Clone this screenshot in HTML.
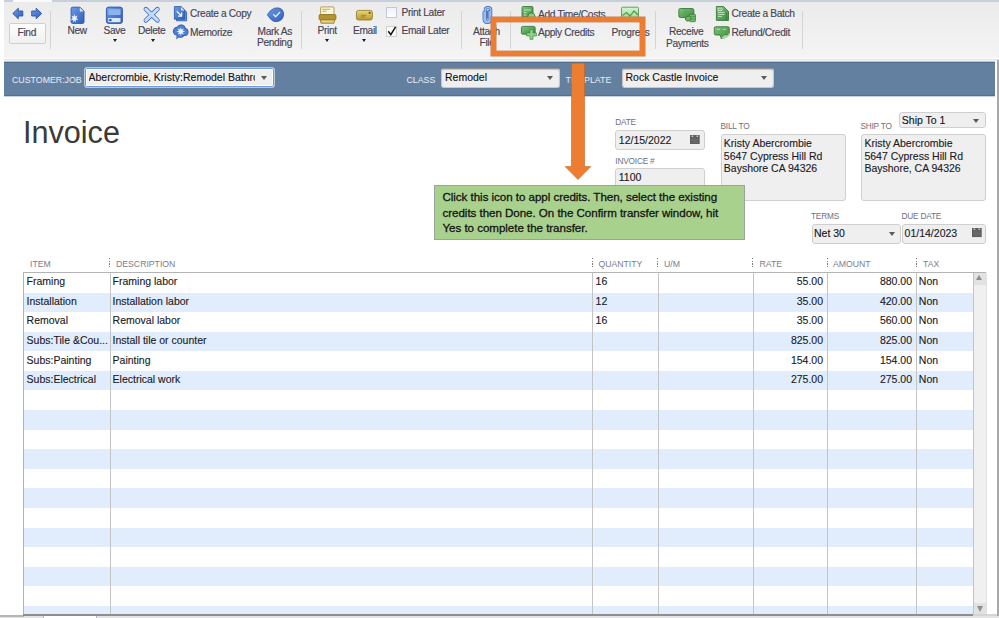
<!DOCTYPE html>
<html><head><meta charset="utf-8">
<style>
*{margin:0;padding:0;box-sizing:border-box}
html,body{width:999px;height:618px;overflow:hidden;background:#fff;font-family:"Liberation Sans",sans-serif}
.a{position:absolute}
.t{position:absolute;white-space:nowrap;line-height:1;font-family:"Liberation Sans",sans-serif}
.tb{font-size:10.2px;letter-spacing:-0.34px;color:#444456;-webkit-text-stroke:0.15px #444456}
.sep{position:absolute;width:1px;background:#d4d4d4}
.hl{font-size:8.8px;color:#e8eef5}
.lbl{font-size:8.3px;letter-spacing:-0.2px;color:#70707e}
.th{font-size:8.7px;color:#7c7c8a}
.bd{font-size:10.5px;color:#1a1a26;-webkit-text-stroke:0.12px #1a1a26}
.dd{position:absolute;background:#efefef;border:1px solid #c8c8c8;border-radius:3px;box-shadow:inset 0 1px 1px rgba(0,0,0,0.18)}
.fld{position:absolute;background:#efefef;border:1px solid #cfcfcf;border-radius:3px}
.arr{position:absolute;width:0;height:0;border-left:3.5px solid transparent;border-right:3.5px solid transparent;border-top:4px solid #5a5a5a}
.darr{position:absolute;width:0;height:0;border-left:2.6px solid transparent;border-right:2.6px solid transparent;border-top:3px solid #1a1a1a}
.row{position:absolute;left:24px;width:949px;height:19.5px}
.vl{position:absolute;top:273px;width:1px;height:342px;background:#c4c4c4}
.dots{position:absolute;top:258px;width:1.2px;height:9.5px;background:repeating-linear-gradient(#7a7a7a 0 1.3px,transparent 1.3px 2.7px)}
</style></head><body>

<!-- toolbar -->
<div class="a" style="left:4px;top:0;width:995px;height:58px;background:linear-gradient(#ebebeb,#f4f4f4)"></div>
<div class="a" style="left:4px;top:0;width:995px;height:2px;background:#c6cfda"></div>
<div class="a" style="left:13px;top:0;width:39px;height:2px;background:#fafafa"></div>
<div class="a" style="left:4px;top:58px;width:995px;height:1px;background:#fdfdfd"></div><div class="a" style="left:4px;top:59px;width:995px;height:1px;background:#e2e2e4"></div><div class="a" style="left:4px;top:60px;width:995px;height:1px;background:#f5f3ef"></div>

<svg class="a" style="left:0;top:0" width="999" height="60" viewBox="0 0 999 60">
<defs>
<linearGradient id="gb" x1="0" y1="0" x2="1" y2="1"><stop offset="0" stop-color="#6d9be6"/><stop offset="1" stop-color="#2f5fb8"/></linearGradient>
<linearGradient id="gbl" x1="0" y1="0" x2="0" y2="1"><stop offset="0" stop-color="#d6e6fc"/><stop offset="1" stop-color="#a8c6f2"/></linearGradient>
<linearGradient id="gg" x1="0" y1="0" x2="1" y2="1"><stop offset="0" stop-color="#7cc47a"/><stop offset="1" stop-color="#3f8c40"/></linearGradient>
<linearGradient id="ggl" x1="0" y1="0" x2="0" y2="1"><stop offset="0" stop-color="#d4f4d0"/><stop offset="1" stop-color="#a4dca0"/></linearGradient>
<linearGradient id="gy" x1="0" y1="0" x2="0" y2="1"><stop offset="0" stop-color="#e8d77a"/><stop offset="1" stop-color="#b89a2c"/></linearGradient>
</defs>
<!-- nav arrows -->
<path d="M12.8 13.5 L18.3 8.2 V11 H22.8 V16 H18.3 V18.8Z" fill="url(#gb)" stroke="#2856aa" stroke-width="0.9" stroke-linejoin="round"/>
<path d="M41.7 13.5 L36.2 8.2 V11 H31.7 V16 H36.2 V18.8Z" fill="url(#gb)" stroke="#2856aa" stroke-width="0.9" stroke-linejoin="round"/>
<!-- New -->
<path d="M72.5 7.2 H80 L84 11.2 V22 Q84 23.4 82.6 23.4 H72.5 Q71.1 23.4 71.1 22 V8.6 Q71.1 7.2 72.5 7.2Z" fill="url(#gb)" stroke="#2856aa" stroke-width="0.9"/>
<path d="M79.8 7.6 V11.4 H83.6Z" fill="#dce8fa"/>
<path d="M74.5 14 L75.3 16.6 L77.8 15.6 L76.3 17.9 L78.3 19.6 L75.7 19.9 L76 22.6 L74.5 20.5 L73 22.6 L73.3 19.9 L70.7 19.6 L72.7 17.9 L71.2 15.6 L73.7 16.6Z" fill="#e8f0fe"/>
<!-- Save -->
<rect x="106.4" y="7.1" width="16" height="16.3" rx="2.2" fill="url(#gb)" stroke="#2856aa" stroke-width="0.9"/>
<rect x="108.3" y="9.2" width="12.2" height="5.8" fill="#8db2ec"/>
<rect x="108.3" y="18" width="12.2" height="4.2" fill="#dae8fc"/>
<rect x="109.3" y="19" width="2.2" height="2.2" fill="#2856aa"/>
<!-- Delete -->
<path d="M145.9 9.2 L157.4 20.3 M157.4 9.2 L145.9 20.3" stroke="#3a68bc" stroke-width="4.6" stroke-linecap="round"/>
<path d="M145.9 9.2 L157.4 20.3 M157.4 9.2 L145.9 20.3" stroke="url(#gbl)" stroke-width="2.8" stroke-linecap="round"/>
<path d="M145.9 9.2 L157.4 20.3 M157.4 9.2 L145.9 20.3" stroke="#c4dafa" stroke-width="2.8" stroke-linecap="round"/>
<!-- Create a Copy -->
<path d="M176.5 8.5 H183 L186.6 12.1 V20.8 H176.5Z" fill="#6f98da" stroke="#2856aa" stroke-width="0.8"/>
<path d="M174.4 6.6 H181.2 L184.8 10.2 V19.2 H174.4Z" fill="url(#gb)" stroke="#2856aa" stroke-width="0.8"/>
<path d="M181 6.9 V10.4 H184.5Z" fill="#dce8fa"/>
<path d="M176.8 11.3 L181.3 15.8 M181.6 12.6 V16.1 H178.1" stroke="#eef4fe" stroke-width="1.3" fill="none"/>
<!-- Memorize -->
<g fill="#2856aa">
<circle cx="177.3" cy="31.2" r="4.4"/><circle cx="181.2" cy="29" r="4.6"/><circle cx="184.4" cy="32" r="4.1"/><circle cx="180.5" cy="33.8" r="3.9"/>
<path d="M176.6 34.6 L176.4 39.6 L180.8 35.6Z"/>
</g>
<g fill="#4f7fd0">
<circle cx="177.3" cy="31.2" r="3.6"/><circle cx="181.2" cy="29" r="3.8"/><circle cx="184.4" cy="32" r="3.3"/><circle cx="180.5" cy="33.8" r="3.1"/>
<path d="M177.2 34.4 L177.1 38.4 L180.2 35.4Z"/>
</g>
<path d="M180.8 27 L181.5 29.6 L183.9 28.4 L182.7 30.8 L185.3 31.5 L182.7 32.2 L183.9 34.6 L181.5 33.4 L180.8 36 L180.1 33.4 L177.7 34.6 L178.9 32.2 L176.3 31.5 L178.9 30.8 L177.7 28.4 L180.1 29.6Z" fill="#eaf2fe"/>
<!-- Mark As Pending -->
<path d="M267.3 14.7 Q270.5 9.5 274.5 8.2 Q279 7 282 9.5 Q284.2 12 283.5 15.5 Q282.6 20.3 277.5 21.5 Q273 22.3 270.5 19 Z" fill="url(#gb)" stroke="#2856aa" stroke-width="0.8" stroke-linejoin="round"/>
<path d="M273.3 14.3 L275.6 16.7 L280 11.9" stroke="#d8e8ff" stroke-width="1.5" fill="none"/>
<!-- Print -->
<rect x="320.6" y="6.9" width="13.4" height="8" rx="1" fill="#fbf6dc" stroke="#a88c28" stroke-width="0.8"/>
<path d="M322.3 9.3 H330 M322.3 11.3 H326.5" stroke="#b49a3c" stroke-width="0.8"/>
<rect x="319.1" y="14.6" width="16.8" height="5.2" rx="1" fill="#b49330" stroke="#8a6e1a" stroke-width="0.8"/>
<path d="M320.3 19.8 H334.7 L334 23.2 H321Z" fill="#e4d088" stroke="#8a6e1a" stroke-width="0.8"/>
<!-- Email -->
<rect x="356.4" y="10.4" width="16" height="9.6" rx="2.2" fill="url(#gy)" stroke="#927420" stroke-width="0.8"/>
<path d="M361 15.3 H366 M361 17 H365" stroke="#8a7020" stroke-width="0.7"/>
<circle cx="369.7" cy="12.8" r="1.1" fill="#6e5410"/>
<!-- Paperclip -->
<path d="M489.2 11.5 V19 Q489.2 21.3 487.2 21.3 Q485.2 21.3 485.2 19 V9.8 Q485.2 7.5 488 7.5 Q490.8 7.5 490.8 9.8 V18.8 Q490.8 22.6 487.4 22.6 Q484 22.6 484 18.8 V12.5" stroke="#3a66b8" stroke-width="2.9" fill="none" stroke-linecap="round"/>
<path d="M489.2 11.5 V19 Q489.2 21.3 487.2 21.3 Q485.2 21.3 485.2 19 V9.8 Q485.2 7.5 488 7.5 Q490.8 7.5 490.8 9.8 V18.8 Q490.8 22.6 487.4 22.6 Q484 22.6 484 18.8 V12.5" stroke="#9dbdf0" stroke-width="1.5" fill="none" stroke-linecap="round"/>
<path d="M487.2 10.5 V18.5" stroke="#1d3a86" stroke-width="0.9"/>
<!-- Add Time/Costs -->
<rect x="522" y="6.5" width="11" height="12" rx="1.2" fill="url(#gg)" stroke="#2f7030" stroke-width="0.8"/>
<path d="M524 10 H531 M524 12.5 H526.5 M524 15 H526.5" stroke="#c8e8c4" stroke-width="0.9"/>
<circle cx="531.5" cy="16.5" r="3.6" fill="#8ccc88" stroke="#2f7030" stroke-width="0.7"/>
<!-- Apply Credits -->
<rect x="521.4" y="26.4" width="13.8" height="7.8" rx="1.5" fill="url(#gg)" stroke="#2f7030" stroke-width="0.8"/>
<path d="M530.6 28.9 H533.6 V32.3 H537 V35.3 H533.6 V38.7 H530.6 V35.3 H527.2 V32.3 H530.6Z" transform="translate(-0.6 0.6)" fill="#92d28e" stroke="#3a8a3a" stroke-width="0.7"/>
<!-- Progress -->
<rect x="621.5" y="7.2" width="17" height="10.5" rx="1.2" fill="url(#ggl)" stroke="#4a8a4a" stroke-width="0.8"/>
<path d="M622.5 15.5 L626.5 12.5 L630 16 L634 11 L638 15" stroke="#4f9a4f" stroke-width="1.2" fill="none"/>
<!-- Receive Payments -->
<rect x="678.8" y="8.5" width="15" height="9" rx="1.6" fill="url(#gg)" stroke="#2f7030" stroke-width="0.8"/>
<circle cx="686" cy="12.8" r="2.2" fill="#5aa65a"/>
<rect x="689.5" y="14.2" width="6" height="7.5" rx="1" fill="#72ba70" stroke="#2f7030" stroke-width="0.7"/>
<path d="M689.8 16.6 H695.2 M689.8 19 H695.2" stroke="#3f8c40" stroke-width="0.6"/>
<ellipse cx="688.2" cy="18.6" rx="3" ry="2.3" transform="rotate(-25 688.2 18.6)" fill="#6cb46a" stroke="#2f7030" stroke-width="0.7"/>
<!-- Create a Batch -->
<path d="M716.4 6.5 H723.5 L728.5 11.5 V20.4 H716.4Z" fill="url(#gg)" stroke="#2f7030" stroke-width="0.8"/>
<path d="M718.2 8.2 H722 V10.5 H718.2Z M718.2 12.5 H724.5 M718.2 14.5 H724.5 M718.2 16.5 H722" stroke="#d0ecd0" stroke-width="0.8" fill="none"/>
<path d="M726.3 12.5 V19.5" stroke="#2f7030" stroke-width="0.6"/>
<!-- Refund/Credit -->
<path d="M715.7 26.7 H727.8 Q729.3 26.7 729.3 28.2 V33.5 Q729.3 35 727.8 35 H724 L721.5 39 L720 35 H715.7 Q714.3 35 714.3 33.5 V28.2 Q714.3 26.7 715.7 26.7Z" fill="url(#gg)" stroke="#2f7030" stroke-width="0.8"/>
<path d="M717 29.5 H720 M723 29.5 H726" stroke="#a8dca4" stroke-width="1"/>
<path d="M729.5 33 Q728.5 37.5 723 37.5 M724.5 35.8 L722.6 37.5 L724.6 39" stroke="#9cd498" stroke-width="1.3" fill="none"/>
</svg>

<div class="a" style="left:8.5px;top:23.3px;width:37.5px;height:20.3px;border:1px solid #d0d0d0;border-radius:2px;background:linear-gradient(#fdfdfd,#f0f0f0)"></div>
<div class="t tb" style="left:17.5px;top:28.4px">Find</div>
<div class="sep" style="left:50px;top:11px;height:38px"></div>

<!-- New -->
<div class="t tb" style="left:67.5px;top:26.4px">New</div>
<!-- Save -->
<div class="t tb" style="left:103.5px;top:26.4px">Save</div>
<div class="darr" style="left:113px;top:38.6px"></div>
<!-- Delete -->
<div class="t tb" style="left:138px;top:26.4px">Delete</div>
<div class="darr" style="left:150.8px;top:38.6px"></div>
<!-- Create a Copy / Memorize -->
<div class="t tb" style="left:190px;top:9.3px">Create a Copy</div>
<div class="t tb" style="left:190px;top:27.7px">Memorize</div>
<!-- Mark As Pending -->
<div class="t tb" style="left:257.5px;top:27.0px">Mark As</div>
<div class="t tb" style="left:257px;top:38.2px">Pending</div>
<div class="sep" style="left:301px;top:11px;height:38px"></div>

<!-- Print -->
<div class="t tb" style="left:317.5px;top:26.2px">Print</div>
<div class="darr" style="left:324.5px;top:39px"></div>
<!-- Email -->
<div class="t tb" style="left:353px;top:26.2px">Email</div>
<div class="darr" style="left:362px;top:39px"></div>
<!-- Print Later / Email Later -->
<div class="a" style="left:386px;top:7px;width:11px;height:11px;border:1px solid #c0c8e0;background:linear-gradient(#f0f2fa,#fff)"></div>
<div class="t tb" style="left:401.5px;top:7.8px">Print Later</div>
<div class="a" style="left:386px;top:25.5px;width:11px;height:11px;border:1px solid #d0d0d0;background:#fafafa"></div>
<svg class="a" style="left:387px;top:26px" width="10" height="10" viewBox="0 0 10 10"><path d="M1.3 5.2 L3.8 8.6 L8.6 0.8" stroke="#111" stroke-width="1.5" fill="none"/></svg>
<div class="t tb" style="left:401.5px;top:26.2px">Email Later</div>
<div class="sep" style="left:461px;top:11px;height:38px"></div>

<!-- Attach File -->
<div class="t tb" style="left:473px;top:27.0px">Attach</div>
<div class="t tb" style="left:479.5px;top:38.0px">File</div>
<div class="sep" style="left:510px;top:11px;height:38px"></div>

<!-- Add Time/Costs -->
<div class="t tb" style="left:538px;top:9.5px">Add Time/Costs</div>
<!-- Apply Credits -->
<div class="t tb" style="left:538px;top:27.8px">Apply Credits</div>
<!-- Progress -->
<div class="t tb" style="left:611.5px;top:27.8px">Progress</div>
<div class="sep" style="left:655px;top:11px;height:38px"></div>

<!-- Receive Payments -->
<div class="t tb" style="left:669px;top:27.4px">Receive</div>
<div class="t tb" style="left:666px;top:38.7px">Payments</div>
<!-- Create a Batch / Refund -->
<div class="t tb" style="left:731.5px;top:9.4px">Create a Batch</div>
<div class="t tb" style="left:731.5px;top:27.8px">Refund/Credit</div>
<div class="sep" style="left:802px;top:11px;height:38px"></div>

<!-- blue header -->
<div class="a" style="left:4px;top:61px;width:991px;height:36px;background:linear-gradient(#b8c6d6 0 1px,#4f6f94 1px 2px,#6480a0 2px 34px,#4f6f94 34px 35px,#c8d2de 35px 36px)"></div>
<div class="a" style="left:997px;top:60px;width:2px;height:558px;background:#a8a8a8"></div>
<div class="t hl" style="left:12px;top:75.6px">CUSTOMER:JOB</div>
<div class="dd" style="left:84px;top:67.3px;width:190.5px;height:20.8px;border:1px solid #b8c8de;box-shadow:inset 0 0 0 1px #6f9cdf,inset 0 0 0 2px #fff;background:#efefef;border-radius:3px"></div>
<div class="t bd" style="left:88.5px;top:71.50px;width:166px;overflow:hidden;color:#111">Abercrombie, Kristy:Remodel Bathroom</div>
<div class="arr" style="left:260.5px;top:75.5px"></div>
<div class="t hl" style="left:406.5px;top:75.6px">CLASS</div>
<div class="dd" style="left:441px;top:68px;width:119px;height:19.5px;border-top:1px solid #909090"></div>
<div class="t bd" style="left:445px;top:71.50px;color:#111">Remodel</div>
<div class="arr" style="left:546.5px;top:76px"></div>
<div class="t hl" style="left:565.5px;top:75.6px">TEMPLATE</div>
<div class="dd" style="left:621.5px;top:68px;width:152.5px;height:19.5px;border-top:1px solid #909090"></div>
<div class="t bd" style="left:625.5px;top:71.50px;color:#111">Rock Castle Invoice</div>
<div class="arr" style="left:761px;top:76px"></div>

<!-- Invoice title -->
<div class="t" style="left:23px;top:117.3px;font-size:30.6px;color:#3a3a3a">Invoice</div>

<!-- date / invoice -->
<div class="t lbl" style="left:615.2px;top:118.2px">DATE</div>
<div class="fld" style="left:615px;top:129.5px;width:90px;height:20px"></div>
<div class="t bd" style="left:618.8px;top:134.60px">12/15/2022</div>
<svg class="a" style="left:690.2px;top:134.6px" width="10" height="9.2" viewBox="0 0 10 9.2"><rect x="0" y="0" width="9.7" height="9.1" fill="#5e5e5e"/><rect x="1.6" y="0.6" width="1.6" height="1.3" fill="#d8d8d8"/><rect x="6.5" y="0.6" width="1.6" height="1.3" fill="#d8d8d8"/><path d="M1.3 4 H8.4 M1.3 5.6 H8.4 M1.3 7.2 H8.4" stroke="#7c7c7c" stroke-width="0.6"/></svg>
<div class="t lbl" style="left:615.3px;top:157px">INVOICE #</div>
<div class="fld" style="left:615px;top:168px;width:90px;height:20px"></div>
<div class="t bd" style="left:618.8px;top:172.30px">1100</div>

<!-- bill to -->
<div class="t lbl" style="left:720.5px;top:121.7px">BILL TO</div>
<div class="fld" style="left:720.5px;top:133.5px;width:125px;height:67px"></div>
<div class="t bd" style="left:723.8px;top:137.00px;line-height:12.7px">Kristy Abercrombie<br>5647 Cypress Hill Rd<br>Bayshore CA 94326</div>
<!-- ship to -->
<div class="t lbl" style="left:860.4px;top:121.8px">SHIP TO</div>
<div class="dd" style="left:898.5px;top:111.8px;width:87.5px;height:16.5px;border-color:#cfcfcf;box-shadow:none"></div>
<div class="t bd" style="left:901.8px;top:114.70px;color:#111">Ship To 1</div>
<div class="arr" style="left:973px;top:119px"></div>
<div class="fld" style="left:861px;top:133.5px;width:125px;height:67px"></div>
<div class="t bd" style="left:864.4px;top:137.00px;line-height:12.7px">Kristy Abercrombie<br>5647 Cypress Hill Rd<br>Bayshore, CA 94326</div>

<!-- terms / due -->
<div class="t lbl" style="left:811px;top:212.2px">TERMS</div>
<div class="t lbl" style="left:901.4px;top:212.2px">DUE DATE</div>
<div class="dd" style="left:811.5px;top:223.5px;width:89px;height:20px;border-color:#cfcfcf;box-shadow:none"></div>
<div class="t bd" style="left:814px;top:228.00px;color:#111">Net 30</div>
<div class="arr" style="left:888.5px;top:231.5px"></div>
<div class="fld" style="left:902px;top:223.5px;width:84px;height:20px"></div>
<div class="t bd" style="left:904.6px;top:228.00px">01/14/2023</div>
<svg class="a" style="left:971.6px;top:228.4px" width="10" height="9.2" viewBox="0 0 10 9.2"><rect x="0" y="0" width="9.7" height="9.1" fill="#5e5e5e"/><rect x="1.6" y="0.6" width="1.6" height="1.3" fill="#d8d8d8"/><rect x="6.5" y="0.6" width="1.6" height="1.3" fill="#d8d8d8"/><path d="M1.3 4 H8.4 M1.3 5.6 H8.4 M1.3 7.2 H8.4" stroke="#7c7c7c" stroke-width="0.6"/></svg>

<!-- table -->
<div class="a" style="left:24px;top:292.58px;width:949px;height:19.58px;background:#e1edfc"></div>
<div class="a" style="left:24px;top:331.74px;width:949px;height:19.58px;background:#e1edfc"></div>
<div class="a" style="left:24px;top:370.90px;width:949px;height:19.58px;background:#e1edfc"></div>
<div class="a" style="left:24px;top:410.06px;width:949px;height:19.58px;background:#e1edfc"></div>
<div class="a" style="left:24px;top:449.22px;width:949px;height:19.58px;background:#e1edfc"></div>
<div class="a" style="left:24px;top:488.38px;width:949px;height:19.58px;background:#e1edfc"></div>
<div class="a" style="left:24px;top:527.54px;width:949px;height:19.58px;background:#e1edfc"></div>
<div class="a" style="left:24px;top:566.70px;width:949px;height:19.58px;background:#e1edfc"></div>
<div class="a" style="left:24px;top:605.86px;width:949px;height:8.14px;background:#e1edfc"></div>
<div class="a" style="left:23px;top:272px;width:963px;height:1px;background:#b4b4b4"></div>
<div class="a" style="left:23px;top:272px;width:1px;height:343px;background:#b4b4b4"></div>
<div class="vl" style="left:110px"></div>
<div class="vl" style="left:592px"></div>
<div class="vl" style="left:658px"></div>
<div class="vl" style="left:753px"></div>
<div class="vl" style="left:827px"></div>
<div class="vl" style="left:916px"></div>
<div class="a" style="left:973px;top:273px;width:13.5px;height:342px;background:#f0f0f0;border-left:1px solid #c4c4c4;border-right:1px solid #e2e2e2"></div>
<div class="a" style="left:974px;top:273px;width:12px;height:11.5px;background:#e2e2e2"></div>
<div class="a" style="left:976.2px;top:275.2px;width:0;height:0;border-left:3.6px solid transparent;border-right:3.6px solid transparent;border-bottom:5.5px solid #8e8e8e"></div>
<div class="a" style="left:974px;top:602.5px;width:11.5px;height:11.5px;background:#e2e2e2"></div>
<div class="a" style="left:976.6px;top:606px;width:0;height:0;border-left:3.8px solid transparent;border-right:3.8px solid transparent;border-top:6.4px solid #8e8e8e"></div>
<div class="a" style="left:0;top:616px;width:999px;height:2px;background:#e4e4e4"></div>
<div class="a" style="left:0;top:615.2px;width:24px;height:1.6px;background:#b4b4b4"></div>
<div class="a" style="left:23px;top:614px;width:950px;height:1.8px;background:#8e8e8e"></div><div class="a" style="left:973px;top:614px;width:24px;height:1.8px;background:#d4d4d4"></div>
<div class="a" style="left:43px;top:616.2px;width:54px;height:1.8px;background:#fff;border-left:1px solid #b8b8b8;border-right:1px solid #b8b8b8"></div>
<div class="t bd" style="left:26.6px;top:276.20px">Framing</div>
<div class="t bd" style="left:112.6px;top:276.20px">Framing labor</div>
<div class="t bd" style="left:595.6px;top:276.20px">16</div>
<div class="t bd" style="right:176px;top:276.20px">55.00</div>
<div class="t bd" style="right:87px;top:276.20px">880.00</div>
<div class="t bd" style="left:918.8px;top:276.20px">Non</div>
<div class="t bd" style="left:26.6px;top:295.78px">Installation</div>
<div class="t bd" style="left:112.6px;top:295.78px">Installation labor</div>
<div class="t bd" style="left:595.6px;top:295.78px">12</div>
<div class="t bd" style="right:176px;top:295.78px">35.00</div>
<div class="t bd" style="right:87px;top:295.78px">420.00</div>
<div class="t bd" style="left:918.8px;top:295.78px">Non</div>
<div class="t bd" style="left:26.6px;top:315.36px">Removal</div>
<div class="t bd" style="left:112.6px;top:315.36px">Removal labor</div>
<div class="t bd" style="left:595.6px;top:315.36px">16</div>
<div class="t bd" style="right:176px;top:315.36px">35.00</div>
<div class="t bd" style="right:87px;top:315.36px">560.00</div>
<div class="t bd" style="left:918.8px;top:315.36px">Non</div>
<div class="t bd" style="left:26.6px;top:334.94px">Subs:Tile &amp;Cou...</div>
<div class="t bd" style="left:112.6px;top:334.94px">Install tile or counter</div>
<div class="t bd" style="right:176px;top:334.94px">825.00</div>
<div class="t bd" style="right:87px;top:334.94px">825.00</div>
<div class="t bd" style="left:918.8px;top:334.94px">Non</div>
<div class="t bd" style="left:26.6px;top:354.52px">Subs:Painting</div>
<div class="t bd" style="left:112.6px;top:354.52px">Painting</div>
<div class="t bd" style="right:176px;top:354.52px">154.00</div>
<div class="t bd" style="right:87px;top:354.52px">154.00</div>
<div class="t bd" style="left:918.8px;top:354.52px">Non</div>
<div class="t bd" style="left:26.6px;top:374.10px">Subs:Electrical</div>
<div class="t bd" style="left:112.6px;top:374.10px">Electrical work</div>
<div class="t bd" style="right:176px;top:374.10px">275.00</div>
<div class="t bd" style="right:87px;top:374.10px">275.00</div>
<div class="t bd" style="left:918.8px;top:374.10px">Non</div>
<div class="t th" style="left:30px;top:260px">ITEM</div>
<div class="dots" style="left:109px"></div>
<div class="t th" style="left:116px;top:260px">DESCRIPTION</div>
<div class="dots" style="left:591.5px"></div>
<div class="t th" style="left:598.4px;top:260px">QUANTITY</div>
<div class="dots" style="left:657px"></div>
<div class="t th" style="left:664px;top:260px">U/M</div>
<div class="dots" style="left:752px"></div>
<div class="t th" style="left:759.6px;top:260px">RATE</div>
<div class="dots" style="left:826.5px"></div>
<div class="t th" style="left:833px;top:260px">AMOUNT</div>
<div class="dots" style="left:915.5px"></div>
<div class="t th" style="left:923px;top:260px">TAX</div>


<!-- orange box & arrow -->
<div class="a" style="left:491px;top:17.4px;width:153.8px;height:38.2px;border:5.5px solid #ed7d31;box-shadow:0 0 0 0.6px rgba(190,90,30,0.6),inset 0 0 0 0.6px rgba(190,90,30,0.6)"></div>
<svg class="a" style="left:560px;top:60px" width="40" height="125" viewBox="0 0 40 125"><path d="M11.5 3.2 H24.5 V106.6 H30.8 L18 119.6 L5.2 106.6 H11.5Z" fill="#ed7d31" stroke="#c9621f" stroke-width="0.6" stroke-linejoin="miter"/></svg>
<!-- callout -->
<div class="a" style="left:434px;top:185px;width:310.5px;height:54.5px;background:#a9d18e;border:1px solid #9aa59a"></div>
<div class="t" style="left:442.5px;top:189.2px;font-size:11.6px;line-height:15.5px;color:#141414;-webkit-text-stroke:0.3px #141414;letter-spacing:-0.05px">Click this icon to appl credits. Then, select the existing<br>credits then Done. On the Confirm transfer window, hit<br>Yes to complete the transfer.</div>
</body></html>
